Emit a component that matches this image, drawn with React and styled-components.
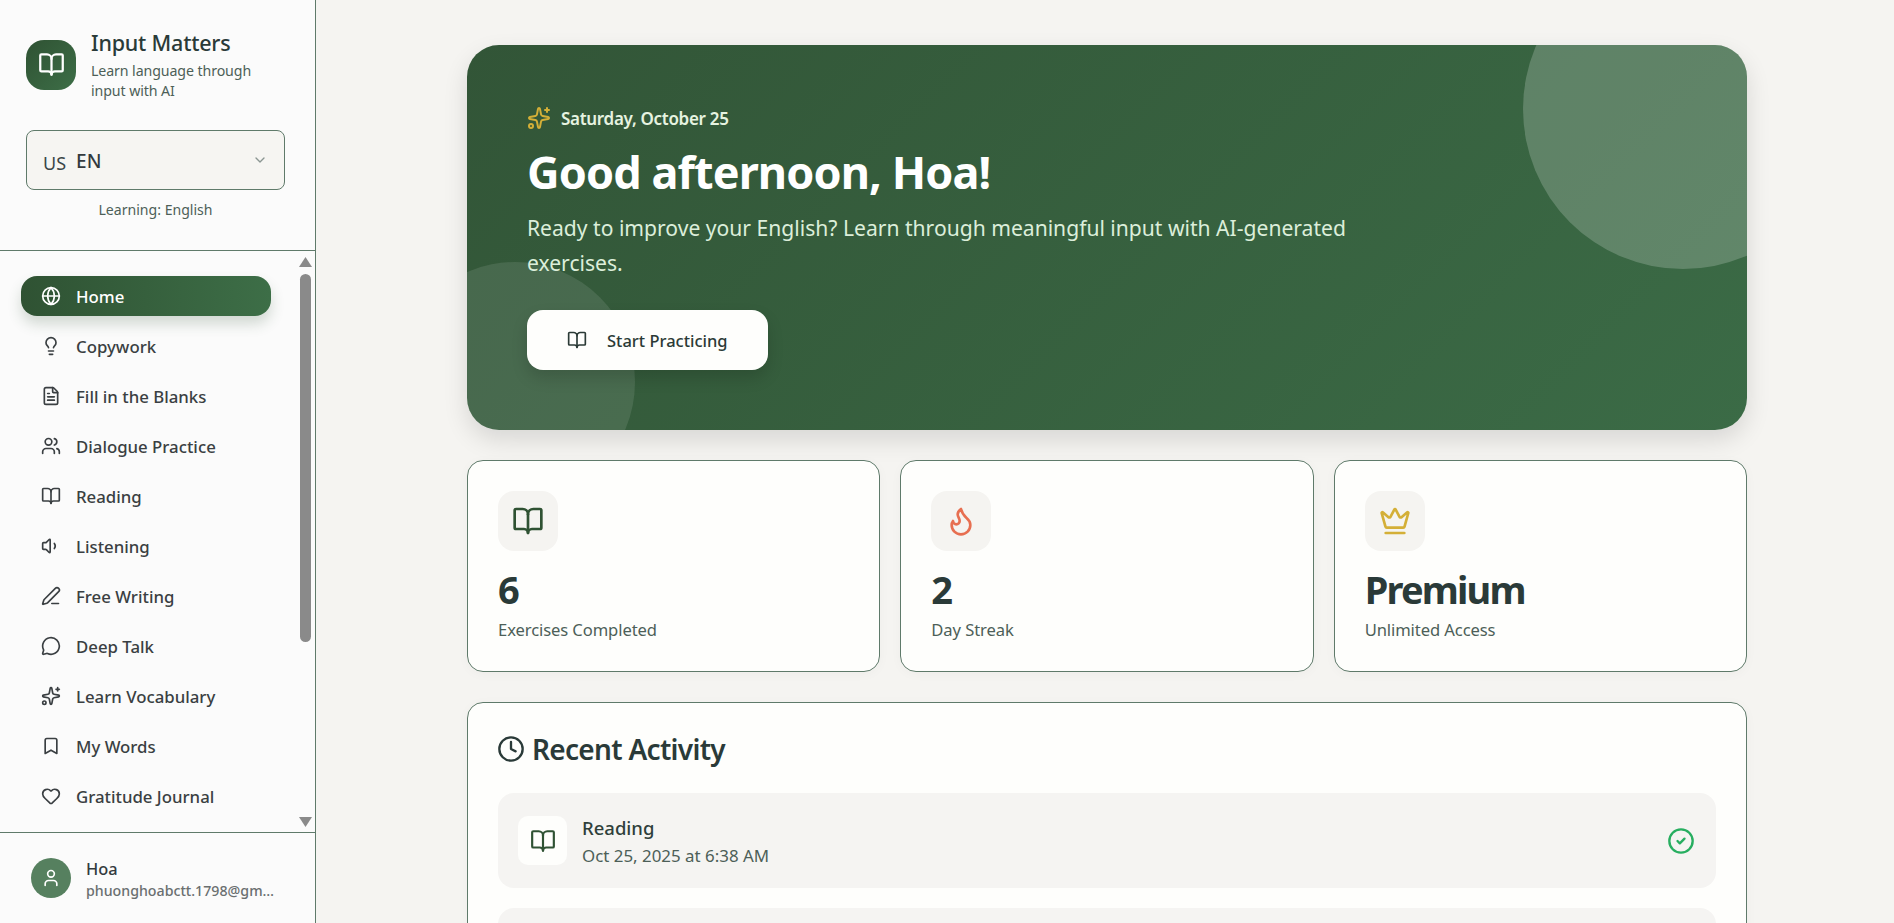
import React from "react";
import styled, { createGlobalStyle } from "styled-components";
import { BookOpen, Globe, Lightbulb, FileText, Users, Volume1, PenLine, MessageCircle, Sparkles, Bookmark, Heart, User, ChevronDown, Flame, Crown, Clock, CircleCheck } from "lucide-react";

const Global = createGlobalStyle`
  * { box-sizing: border-box; }
  html, body { margin: 0; padding: 0; height: 100%; overflow: hidden; }
  body { font-family: "Noto Sans", "Open Sans", sans-serif; background: #f5f4f1; color: #2b3a36; }
`;
const Shell = styled.div`display: flex; height: 923px; overflow: hidden;`;
const Sidebar = styled.aside`
  width: 316px; flex: none; display: flex; flex-direction: column; height: 100%;
  background: #fbfbfb; border-right: 1px solid #5f7a6a;
`;
const SideHead = styled.div`
  height: 251px; flex: none; padding: 28px 30px 0 26px; border-bottom: 1px solid #5f7a6a;
`;
const Brand = styled.div`display: flex; align-items: center; gap: 15px;`;
const LogoBox = styled.div`
  width: 50px; height: 50px; flex: none; border-radius: 18px; display: flex; align-items: center; justify-content: center;
  background: linear-gradient(135deg, #2f5233, #3d6e47); color: #fff;
`;
const BrandTitle = styled.div`font-size: 21.5px; font-weight: 500; line-height: 30px; color: #2a3a38; letter-spacing: -0.2px;`;
const BrandSub = styled.div`font-size: 14.2px; line-height: 20px; color: #4d5f58; margin-top: 3px; width: 180px; letter-spacing: -0.1px;`;
const Select = styled.div`
  margin-top: 29px; height: 60px; border: 1px solid #5f7a6a; border-radius: 8px; background: #f6f5f2;
  display: flex; align-items: center; padding: 0 16px; color: #3a3f42;
`;
const Flag = styled.span`font-size: 18px; margin-right: 10px; margin-top: 6px; color: #3a4548;`;
const Lang = styled.span`flex: 1; font-size: 19px; font-weight: 500; color: #333a3e; margin-top: 1px;`;
const LearnNote = styled.div`text-align: center; font-size: 14.1px; line-height: 20px; margin-top: 10px; color: #4d5f58;`;
const NavWrap = styled.div`position: relative; flex: 1; min-height: 0;`;
const Nav = styled.nav`
  height: 100%; overflow: hidden; padding: 25px 0 0 21px; display: flex; flex-direction: column; gap: 10px;
`;
const NavItem = styled.a`
  width: 250px; height: 40px; flex: none; display: flex; align-items: center; gap: 15px; padding-left: 20px; border-radius: 16px;
  font-size: 16.8px; font-weight: 500;
  color: ${p => (p.$active ? "#fff" : "#3a3f42")};
  background: ${p => (p.$active ? "linear-gradient(90deg, #2f5233, #3d6e47)" : "transparent")};
  box-shadow: ${p => (p.$active ? "0 8px 14px rgba(47,82,51,.2)" : "none")};
  svg { flex: none; }
`;
const ScrollRail = styled.div`
  position: absolute; top: 0; bottom: 0; right: 3px; width: 13px; padding: 6px 0 5px;
  display: flex; flex-direction: column; align-items: center; color: #8a8a8a;
`;
const ScrollThumb = styled.div`width: 11px; height: 368px; margin-top: 7px; border-radius: 6px; background: #8a8a8a;`;
const ScrollArrow = styled.svg`
  display: block; flex: none; width: 13px; height: 10px; fill: currentColor;
  ${p => (p.$down ? "margin-top: auto;" : "")}
`;
const SideFoot = styled.div`
  height: 91px; flex: none; border-top: 1px solid #5f7a6a; display: flex; align-items: center; gap: 15px; padding: 0 24px 0 31px;
`;
const Avatar = styled.div`
  width: 40px; height: 40px; flex: none; border-radius: 50%; background: #56805f; color: #fff;
  display: flex; align-items: center; justify-content: center;
`;
const UserText = styled.div`min-width: 0; flex: 1; padding-top: 3px;`;
const UserName = styled.div`font-size: 16.4px; font-weight: 500; line-height: 22px; color: #333a3e;`;
const UserMail = styled.div`
  font-size: 14.2px; font-weight: 500; line-height: 21px; color: #6a6f70; max-width: 190px;
  white-space: nowrap; overflow: hidden; text-overflow: ellipsis;
`;
const Main = styled.main`flex: 1; min-width: 0; overflow: hidden; padding: 45px 0 0 151px;`;
const Column = styled.div`width: 1280px; display: flex; flex-direction: column; gap: 30px;`;
const HeroWrap = styled.div`border-radius: 32px; box-shadow: 0 10px 25px rgba(0,0,0,.12);`;
const Hero = styled.section`
  position: relative; overflow: hidden; height: 385px; border-radius: 32px; padding: 58px 60px 0;
  background: linear-gradient(135deg, #325537, #3b6b46); color: #fff;
`;
const Circle = styled.div`
  position: absolute; border-radius: 50%;
  width: ${p => p.$size}px; height: ${p => p.$size}px; background: rgba(255,255,255,${p => p.$alpha});
  ${p => (p.$corner === "tr" ? "top: -96px; right: -96px;" : "bottom: -72px; left: -72px;")}
`;
const HeroContent = styled.div`position: relative;`;
const DateRow = styled.div`display: flex; align-items: center; gap: 10px; font-size: 17px; font-weight: 600; color: #e6f3e0; height: 30px; letter-spacing: -0.3px;`;
const Heading = styled.h1`margin: 7px 0 0; font-size: 45px; line-height: 64px; font-weight: 700; color: #fff; letter-spacing: -0.9px;`;
const Lead = styled.p`margin: 6px 0 0; font-size: 21.1px; line-height: 35px; color: #dceeda; max-width: 840px;`;
const HeroButton = styled.button`
  margin-top: 30px; width: 241px; height: 60px; border: 0; border-radius: 16px; background: #fefefc; color: #2b3a36;
  display: flex; align-items: center; gap: 20px; padding: 0 0 0 40px; font: 500 16.5px "Noto Sans", sans-serif;
  box-shadow: 0 8px 16px rgba(0,0,0,.15);
`;
const Stats = styled.div`display: grid; grid-template-columns: repeat(3, 1fr); gap: 20px;`;
const Card = styled.div`
  background: #fefefc; border: 1px solid #5f7a6a; border-radius: 16px; box-shadow: 0 2px 12px rgba(0,0,0,.03);
`;
const StatCard = styled(Card)`height: 212px; padding: 30px;`;
const StatIcon = styled.div`
  width: 60px; height: 60px; border-radius: 16px; background: #f5f4f1; display: flex; align-items: center; justify-content: center;
  color: ${p => p.$color};
`;
const StatValue = styled.div`margin-top: 13px; font-size: 38px; line-height: 50px; font-weight: 700; color: #2a3a38; letter-spacing: -1.8px;`;
const StatLabel = styled.div`font-size: 16.6px; line-height: 24px; color: #4d5f58; margin-top: 4px; letter-spacing: -0.1px;`;
const Activity = styled(Card)`padding: 30px; min-height: 400px;`;
const ActivityTitle = styled.h2`
  margin: 0; display: flex; align-items: center; gap: 6px; height: 32px; font-size: 28px; font-weight: 600; color: #2a3a38; letter-spacing: -0.7px;
  svg { margin-left: -1.5px; margin-right: 1.5px; flex: none; }
`;
const Rows = styled.div`margin-top: 28px; display: flex; flex-direction: column; gap: 20px;`;
const Row = styled.div`
  height: 95px; border-radius: 16px; background: #f5f4f2; display: flex; align-items: center; padding: 0 21px 0 20px; gap: 15px;
`;
const RowIcon = styled.div`
  width: 49px; height: 49px; border-radius: 10px; background: #fefefc; color: #2f5233; display: flex; align-items: center; justify-content: center;
`;
const RowText = styled.div`flex: 1; padding-top: 2px;`;
const RowTitle = styled.div`font-size: 18.5px; line-height: 27px; font-weight: 500; color: #2f3f3b;`;
const RowDate = styled.div`font-size: 16.9px; line-height: 27px; margin-top: 1px; color: #4d5f58;`;
const Done = styled.div`color: #27ae60; display: flex;`;

const items = [
  [Globe, "Home"], [Lightbulb, "Copywork"], [FileText, "Fill in the Blanks"], [Users, "Dialogue Practice"],
  [BookOpen, "Reading"], [Volume1, "Listening"], [PenLine, "Free Writing"], [MessageCircle, "Deep Talk"],
  [Sparkles, "Learn Vocabulary"], [Bookmark, "My Words"], [Heart, "Gratitude Journal"],
];
const stats = [
  [BookOpen, "#2f5233", "6", "Exercises Completed"],
  [Flame, "#e76f51", "2", "Day Streak"],
  [Crown, "#d4af37", "Premium", "Unlimited Access"],
];
const rows = [["Reading", "Oct 25, 2025 at 6:38 AM"], ["Reading", "Oct 25, 2025 at 6:30 AM"]];

export default function App() {
  return (
    <Shell>
      <Global />
      <Sidebar>
        <SideHead>
          <Brand>
            <LogoBox><BookOpen size={27} /></LogoBox>
            <div>
              <BrandTitle>Input Matters</BrandTitle>
              <BrandSub>Learn language through input with AI</BrandSub>
            </div>
          </Brand>
          <Select>
            <Flag>US</Flag>
            <Lang>EN</Lang>
            <ChevronDown size={16} color="#8b9692" />
          </Select>
          <LearnNote>Learning: English</LearnNote>
        </SideHead>
        <NavWrap>
          <Nav>
            {items.map(([Icon, label], i) => (
              <NavItem key={label} $active={i === 0}><Icon size={20} />{label}</NavItem>
            ))}
          </Nav>
          <ScrollRail>
            <ScrollArrow viewBox="0 0 13 10"><path d="M6.5 0 13 10H0Z" /></ScrollArrow>
            <ScrollThumb />
            <ScrollArrow $down viewBox="0 0 13 10"><path d="M6.5 10 13 0H0Z" /></ScrollArrow>
          </ScrollRail>
        </NavWrap>
        <SideFoot>
          <Avatar><User size={20} /></Avatar>
          <UserText>
            <UserName>Hoa</UserName>
            <UserMail>phuonghoabctt.1798@gmail.com</UserMail>
          </UserText>
        </SideFoot>
      </Sidebar>
      <Main>
        <Column>
          <HeroWrap>
            <Hero>
              <Circle $corner="tr" $size={320} $alpha={0.2} />
              <Circle $corner="bl" $size={240} $alpha={0.1} />
              <HeroContent>
                <DateRow><Sparkles size={24} color="#d4af37" />Saturday, October 25</DateRow>
                <Heading>Good afternoon, Hoa!</Heading>
                <Lead>Ready to improve your English? Learn through meaningful input with AI-generated exercises.</Lead>
                <HeroButton><BookOpen size={20} />Start Practicing</HeroButton>
              </HeroContent>
            </Hero>
          </HeroWrap>
          <Stats>
            {stats.map(([Icon, color, value, label]) => (
              <StatCard key={label}>
                <StatIcon $color={color}><Icon size={32} /></StatIcon>
                <StatValue>{value}</StatValue>
                <StatLabel>{label}</StatLabel>
              </StatCard>
            ))}
          </Stats>
          <Activity>
            <ActivityTitle><Clock size={28} />Recent Activity</ActivityTitle>
            <Rows>
              {rows.map(([t, d]) => (
                <Row key={d}>
                  <RowIcon><BookOpen size={26} /></RowIcon>
                  <RowText><RowTitle>{t}</RowTitle><RowDate>{d}</RowDate></RowText>
                  <Done><CircleCheck size={28} /></Done>
                </Row>
              ))}
            </Rows>
          </Activity>
        </Column>
      </Main>
    </Shell>
  );
}
